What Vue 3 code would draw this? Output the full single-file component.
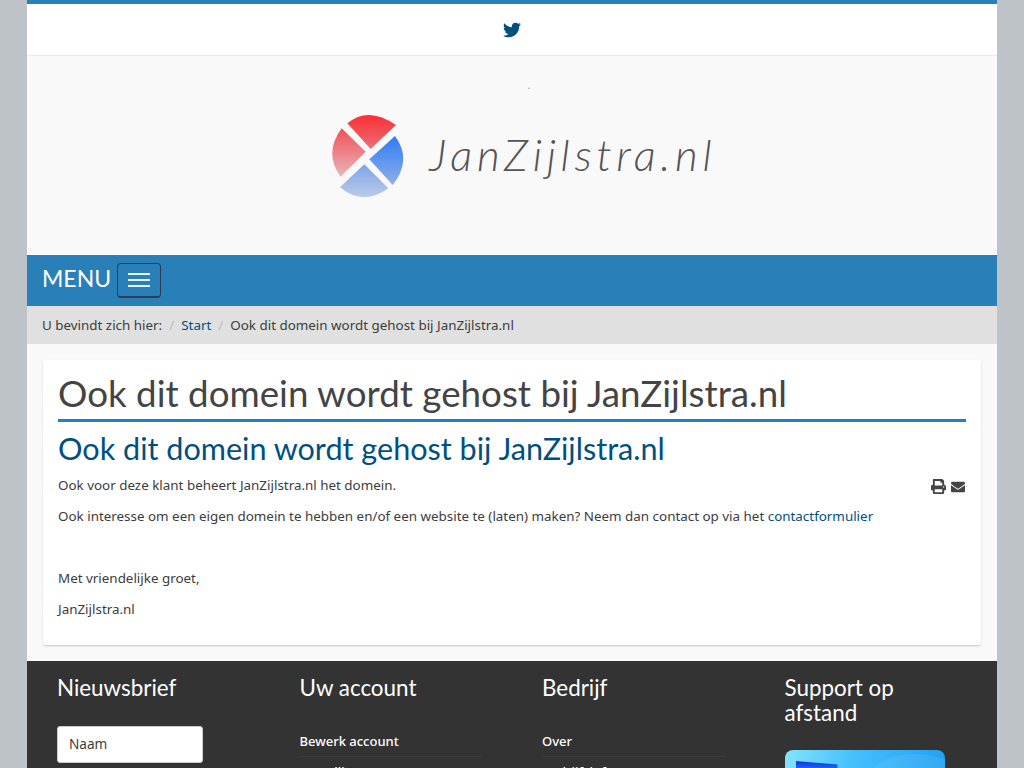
<script setup>
const footerCols = [
  { title: 'Uw account', links: ['Bewerk account', 'Bestellingen', 'Facturen'] },
  { title: 'Bedrijf', links: ['Over', 'Bedrijfsinfo', 'Contact'] }
]
const h1 = 'Ook dit domein wordt gehost bij JanZijlstra.nl'
</script>

<template>
  <div class="page">
    <div class="topbar">
      <svg class="twitter" viewBox="0 0 512 512" aria-label="Twitter"><path d="M459.37 151.716c.325 4.548.325 9.097.325 13.645 0 138.72-105.583 298.558-298.558 298.558-59.452 0-114.68-17.219-161.137-47.106 8.447.974 16.568 1.299 25.34 1.299 49.055 0 94.213-16.568 130.274-44.832-46.132-.975-84.792-31.188-98.112-72.772 6.498.974 12.995 1.624 19.818 1.624 9.421 0 18.843-1.3 27.614-3.573-48.081-9.747-84.143-51.98-84.143-102.985v-1.299c13.969 7.797 30.214 12.67 47.431 13.319-28.264-18.843-46.781-51.005-46.781-87.391 0-19.492 5.197-37.36 14.294-52.954 51.655 63.675 129.3 105.258 216.365 109.807-1.624-7.797-2.599-15.918-2.599-24.04 0-57.828 46.782-104.934 104.934-104.934 30.213 0 57.502 12.67 76.67 33.137 23.715-4.548 46.456-13.32 66.599-25.34-7.798 24.366-24.366 44.833-46.132 57.827 21.117-2.273 41.584-8.122 60.426-16.243-14.292 20.791-32.161 39.308-52.628 54.253z"/></svg>
    </div>

    <header class="logo-row">
      <svg class="logo" viewBox="0 0 1200 390">
        <defs>
          <linearGradient id="red" x1="0" y1="0" x2="0" y2="1">
            <stop offset="0" stop-color="#ef5157"/>
            <stop offset="1" stop-color="#e9b5b8"/>
          </linearGradient>
          <linearGradient id="blue" x1="0" y1="0" x2="0" y2="1">
            <stop offset="0" stop-color="#2f7bf5"/>
            <stop offset="1" stop-color="#8fb0e6"/>
          </linearGradient>
          <linearGradient id="redTop" x1="0" y1="0" x2="0" y2="1">
            <stop offset="0" stop-color="#fb2f35"/>
            <stop offset="1" stop-color="#ea6f75"/>
          </linearGradient>
          <linearGradient id="blueBottom" x1="0" y1="0" x2="0" y2="1">
            <stop offset="0" stop-color="#7ea4e6"/>
            <stop offset="1" stop-color="#b9cbea"/>
          </linearGradient>
        </defs>
        <circle cx="627" cy="25" r="2.2" fill="#999"/>
        <path d="M82 130 Q145 77 228 135 L152 207 Z" fill="url(#redTop)"/>
        <path d="M65 145 L137 215 L62 290 Q10 220 65 145 Z" fill="url(#red)"/>
        <path d="M225 168 L148 238 L218 315 Q278 240 225 168 Z" fill="url(#blue)"/>
        <path d="M60 322 L133 253 L205 325 Q130 380 60 322 Z" fill="url(#blueBottom)"/>
        <text class="logo-text" x="328" y="272" textLength="847" lengthAdjust="spacing">JanZijlstra.nl</text>
      </svg>
    </header>

    <nav class="menu">
      <span class="menu-label">MENU</span>
      <button class="toggler" type="button" aria-label="Menu">
        <span></span><span></span><span></span>
      </button>
    </nav>

    <div class="crumbs">
      <span>U bevindt zich hier:</span>
      <span class="sep">/</span>
      <a href="#">Start</a>
      <span class="sep">/</span>
      <span>{{ h1 }}</span>
    </div>

    <main class="content">
      <article class="card">
        <h1>{{ h1 }}</h1>
        <h2>{{ h1 }}</h2>
        <div class="tools">
          <svg class="print" viewBox="0 0 512 512"><path d="M448 192V77.25c0-8.49-3.37-16.62-9.37-22.63L393.37 9.37c-6-6-14.14-9.37-22.63-9.37H96C78.33 0 64 14.33 64 32v160c-35.35 0-64 28.65-64 64v112c0 8.84 7.16 16 16 16h48v96c0 17.67 14.33 32 32 32h320c17.67 0 32-14.33 32-32v-96h48c8.84 0 16-7.16 16-16V256c0-35.35-28.65-64-64-64zm-64 256H128v-96h256v96zm0-224H128V64h192v48c0 8.84 7.16 16 16 16h48v96zm48 72c-13.25 0-24-10.75-24-24 0-13.26 10.75-24 24-24s24 10.74 24 24c0 13.25-10.75 24-24 24z"/></svg>
          <svg class="mail" viewBox="0 0 512 512"><path d="M502.3 190.8c3.9-3.1 9.7-.2 9.7 4.7V400c0 26.5-21.5 48-48 48H48c-26.5 0-48-21.5-48-48V195.6c0-5 5.7-7.8 9.7-4.7 22.4 17.4 52.1 39.5 154.1 113.6 21.1 15.4 56.7 47.8 92.2 47.6 35.7.3 72-32.8 92.3-47.6 102-74.1 131.6-96.3 154-113.7zM256 320c23.2.4 56.6-29.2 73.4-41.4 132.7-96.3 142.8-104.7 173.4-128.7 5.8-4.5 9.2-11.5 9.2-18.9v-19c0-26.5-21.5-48-48-48H48C21.5 64 0 85.5 0 112v19c0 7.4 3.4 14.3 9.2 18.9 30.6 23.9 40.7 32.4 173.4 128.7 16.8 12.2 50.2 41.8 73.4 41.4z"/></svg>
        </div>
        <p>Ook voor deze klant beheert JanZijlstra.nl het domein.</p>
        <p>Ook interesse om een eigen domein te hebben en/of een website te (laten) maken? Neem dan contact op via het <a href="#">contactformulier</a></p>
        <p>&nbsp;</p>
        <p>Met vriendelijke groet,</p>
        <p>JanZijlstra.nl</p>
      </article>
    </main>

    <footer class="footer">
      <section class="col">
        <h3>Nieuwsbrief</h3>
        <div class="input">Naam</div>
      </section>
      <section v-for="col in footerCols" :key="col.title" class="col">
        <h3>{{ col.title }}</h3>
        <ul>
          <li v-for="link in col.links" :key="link">{{ link }}</li>
        </ul>
      </section>
      <section class="col">
        <h3>Support op afstand</h3>
        <div class="support">
          <span class="support-shine"></span>
          <span class="support-mark"></span>
        </div>
      </section>
    </footer>
  </div>
</template>

<style>
html, body {
  margin: 0;
  height: 768px;
  overflow: hidden;
  background: #bdc3c7;
}
</style>

<style scoped>
.page {
  width: 970px;
  margin: 0 auto;
  background: #f9f9f9;
  font-family: "Noto Sans", "Open Sans", sans-serif;
  font-size: 13.4px;
  color: #3c3c3c;
}
a {
  color: #00507f;
  text-decoration: none;
}
.topbar {
  height: 51px;
  background: #fff;
  border-top: 4px solid #2980b9;
  border-bottom: 1px solid #e8e8e8;
  display: flex;
  align-items: center;
  justify-content: center;
}
.twitter {
  width: 18px;
  height: 18px;
  fill: #00507f;
}
.logo-row {
  height: 199px;
  box-sizing: border-box;
  padding: 24px 0 0 16px;
  display: flex;
  justify-content: center;
  align-items: flex-start;
}
.logo {
  width: 400px;
  height: 130px;
  display: block;
}
.logo-text {
  font-family: Lato, sans-serif;
  font-style: italic;
  font-weight: 300;
  font-size: 132px;
  fill: #555;
}
.menu {
  height: 51px;
  box-sizing: border-box;
  background: #2980b9;
  padding: 8px 15px 0;
  display: flex;
  align-items: flex-start;
  gap: 6px;
}
.menu-label {
  font-family: Lato, sans-serif;
  font-size: 23px;
  line-height: 30px;
  color: #fff;
}
.toggler {
  width: 44px;
  height: 35px;
  box-sizing: border-box;
  padding: 0;
  background: transparent;
  border: 1px solid #2c3e50;
  border-bottom-width: 2px;
  border-radius: 4px;
  display: flex;
  flex-direction: column;
  align-items: center;
  justify-content: center;
  gap: 4px;
}
.toggler span {
  width: 22px;
  height: 2px;
  background: #e8f2f8;
}
.crumbs {
  height: 38px;
  box-sizing: border-box;
  padding: 1px 15px 1px;
  background: #e0e0e0;
  display: flex;
  align-items: center;
}
.sep {
  color: #bbb;
  padding: 0 7px;
}
.content {
  padding: 16px 16px;
}
.card {
  height: 285px;
  box-sizing: border-box;
  padding: 15px 15px 15px;
  background: #fff;
  border-radius: 3px;
  box-shadow: 0 1px 2px rgba(0, 0, 0, 0.2);
}
h1, h2, h3 {
  font-family: Lato, sans-serif;
  font-weight: 400;
  margin: 0;
}
h1 {
  font-size: 36.75px;
  line-height: 37px;
  padding-bottom: 7px;
  border-bottom: 3px solid #2980b9;
  color: #444;
}
h2 {
  font-size: 30.6px;
  line-height: 36px;
  margin: 9px 0 0;
  color: #00507f;
}
.tools {
  float: right;
  display: flex;
  align-items: center;
  gap: 5px;
  margin: 12px 1px 0 0;
}
.print, .mail {
  width: 15px;
  height: 15px;
  fill: #444;
}
.mail {
  width: 14px;
  height: 14px;
}
p {
  margin: 0 0 10px;
  line-height: 21px;
}
h2 + .tools + p {
  margin-top: 8px;
}
.footer {
  height: 200px;
  background: #333;
  display: grid;
  grid-template-columns: repeat(4, 1fr);
  color: #fff;
}
.col {
  padding: 14px 30px 0;
}
h3 {
  font-size: 22.4px;
  line-height: 25px;
  color: #fff;
}
ul {
  list-style: none;
  margin: 26px 0 0;
  padding: 0;
}
li {
  font-size: 13px;
  font-weight: 500;
  line-height: 20px;
  padding: 5px 0;
  border-bottom: 1px solid #3d3d3d;
}
.input {
  margin-top: 26px;
  width: 146px;
  height: 37px;
  box-sizing: border-box;
  padding: 0 11px;
  line-height: 34px;
  font-size: 13.6px;
  background: #fff;
  color: #3c3c3c;
  border: 1px solid #ccc;
  border-radius: 3px;
}
.support {
  position: relative;
  overflow: hidden;
  margin-top: 25px;
  width: 160px;
  height: 70px;
  border-radius: 8px;
  background: linear-gradient(100deg, #84e4ff 0%, #45c0fb 40%, #1e9df5 100%);
}
.support-shine {
  position: absolute;
  right: -20px;
  top: 4px;
  width: 100px;
  height: 60px;
  border-radius: 50%;
  background: rgba(255, 255, 255, 0.08);
}
.support-mark {
  position: absolute;
  left: 11px;
  top: 11px;
  width: 42px;
  height: 30px;
  background: linear-gradient(180deg, #1230e0 0%, #1e8cf0 40%, #3db4f8 100%);
  clip-path: polygon(0 0, 100% 12%, 100% 100%, 0 100%);
}
</style>
